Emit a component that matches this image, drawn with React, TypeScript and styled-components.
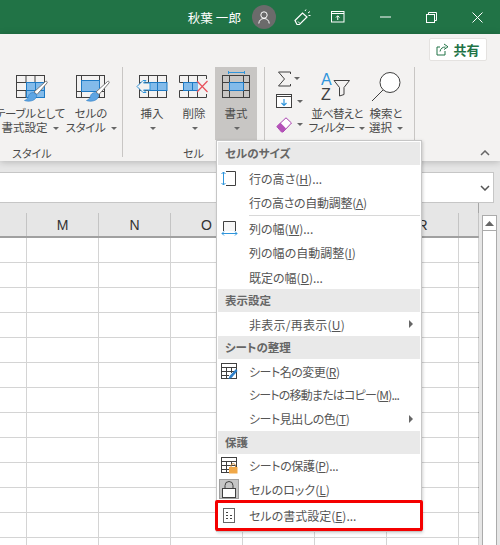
import React, { ReactElement, ReactNode } from 'react'
import styled, { createGlobalStyle } from 'styled-components'

const Global = createGlobalStyle`
  html, body {
    margin: 0;
    padding: 0;
    background: #fff;
  }
  * {
    box-sizing: border-box;
  }
`

const JP = `"Noto Sans CJK JP", "Noto Sans", sans-serif`

const Styled = {
  Page: styled.div`
    position: relative;
    width: 500px;
    height: 545px;
    overflow: hidden;
    background: #e6e6e6;
    font-family: ${JP};
    font-feature-settings: 'palt';
  `,
  TitleBar: styled.div`
    display: flex;
    align-items: center;
    justify-content: flex-end;
    height: 34px;
    background: #217346;
    color: #fff;
    font-size: 12.5px;
  `,
  UserName: styled.div`
    margin-right: 11px;
    letter-spacing: 0.1px;
  `,
  Avatar: styled.div`
    display: flex;
    align-items: center;
    justify-content: center;
    width: 24px;
    height: 24px;
    margin-right: 14px;
    border-radius: 50%;
    background: #6b6b6b;
  `,
  TitleIcon: styled.div<{ $w: number }>`
    display: flex;
    align-items: center;
    justify-content: center;
    width: ${(p) => p.$w}px;
    height: 34px;
  `,
  Ribbon: styled.div`
    position: relative;
    height: 127px;
    background: #f3f2f1;
    box-shadow: 0 1px 7px rgba(0, 0, 0, 0.22);
  `,
  ShareRow: styled.div`
    display: flex;
    justify-content: flex-end;
    height: 33px;
    padding: 4px 13px 0 0;
  `,
  ShareButton: styled.div`
    display: flex;
    align-items: center;
    justify-content: center;
    gap: 4px;
    width: 58px;
    height: 23px;
    background: #fff;
    border: 1px solid #e4e2e0;
    border-radius: 2px;
    color: #217346;
    font-size: 13px;
    font-weight: 700;
  `,
  Groups: styled.div`
    display: flex;
    height: 90px;
  `,
  Group: styled.div<{ $w: number }>`
    display: flex;
    flex-direction: column;
    flex: none;
    width: ${(p) => p.$w}px;
    height: 90px;
    border-right: 1px solid #c8c6c4;
  `,
  GroupButtons: styled.div<{ $align?: string; $pad?: string }>`
    display: flex;
    flex: none;
    height: 79px;
    justify-content: ${(p) => p.$align || 'flex-start'};
    padding: ${(p) => p.$pad || '0'};
  `,
  GroupLabel: styled.div<{ $pad: string }>`
    flex: none;
    height: 14px;
    padding: ${(p) => p.$pad};
    color: #4a4a4a;
    font-size: 11px;
    line-height: 14px;
    white-space: nowrap;
  `,
  BigButton: styled.div<{ $w: number; $active?: boolean }>`
    display: flex;
    flex: none;
    flex-direction: column;
    align-items: center;
    width: ${(p) => p.$w}px;
    height: 73px;
    background: ${(p) => (p.$active ? '#c8c6c4' : 'transparent')};
    color: #4a4a4a;
    font-size: 11.5px;
    line-height: 14px;
    white-space: nowrap;
  `,
  BigIcon: styled.div<{ $top: number }>`
    display: flex;
    align-items: flex-start;
    justify-content: center;
    height: 39px;
    padding-top: ${(p) => p.$top}px;
  `,
  BigLine: styled.div<{ $ls?: number }>`
    letter-spacing: ${(p) => p.$ls || 0}px;
  `,
  Caret: styled.span<{ $solo?: boolean }>`
    display: inline-block;
    width: 0;
    height: 0;
    margin-left: ${(p) => (p.$solo ? 1 : 5)}px;
    vertical-align: 2px;
    border-left: 3px solid transparent;
    border-right: 3px solid transparent;
    border-top: 3px solid #666;
  `,
  SmallStack: styled.div`
    display: flex;
    flex: none;
    flex-direction: column;
    width: 43px;
    padding-left: 11px;
  `,
  SmallButton: styled.div`
    display: flex;
    align-items: center;
    height: 23px;
  `,
  Collapse: styled.div`
    position: absolute;
    right: 10px;
    bottom: 5px;
    display: flex;
  `,
  FormulaRow: styled.div`
    height: 42px;
    padding: 11px 6px 0 0;
  `,
  FormulaBox: styled.div`
    display: flex;
    align-items: center;
    justify-content: flex-end;
    height: 31px;
    padding-right: 3px;
    background: #fff;
    border: 1px solid #c6c6c6;
    border-left: 0;
  `,
  SheetArea: styled.div`
    display: flex;
    height: 342px;
  `,
  Sheet: styled.div`
    flex: none;
    width: 479px;
    border-right: 1px solid #a6a6a6;
  `,
  HeaderRow: styled.div`
    display: flex;
    align-items: flex-end;
    height: 35px;
    border-bottom: 2px solid #a0a0a0;
  `,
  HeaderCell: styled.div<{ $w: number }>`
    display: flex;
    align-items: center;
    justify-content: center;
    flex: none;
    width: ${(p) => p.$w}px;
    height: 23px;
    border-right: 1px solid #c4c4c4;
    color: #333;
    font-family: 'Liberation Sans', sans-serif;
    font-size: 14px;
  `,
  Row: styled.div`
    display: flex;
    height: 25px;
    background: #fff;
    border-bottom: 1px solid #d4d4d4;
  `,
  Cell: styled.div<{ $w: number }>`
    flex: none;
    width: ${(p) => p.$w}px;
    border-right: 1px solid #d4d4d4;
  `,
  ScrollBar: styled.div`
    display: flex;
    flex-direction: column;
    flex: none;
    width: 15px;
    height: 331px;
    margin: 12px 0 0 3px;
    background: #fff;
    border: 1px solid #ababab;
    border-bottom: 0;
  `,
  ScrollUp: styled.div`
    display: flex;
    align-items: center;
    justify-content: center;
    height: 15px;
    border-bottom: 1px solid #ababab;
  `,
  Menu: styled.div`
    position: absolute;
    left: 216px;
    top: 140px;
    width: 206px;
    padding: 1px;
    background: #fff;
    border: 1px solid #c6c6c6;
    box-shadow: 1px 1px 3px rgba(0, 0, 0, 0.18);
    color: #555;
    font-size: 12px;
  `,
  MenuHeader: styled.div`
    height: 23px;
    padding-left: 7px;
    background: #e9e9e9;
    color: #666;
    font-size: 11.5px;
    font-weight: 700;
    line-height: 23px;
  `,
  MenuItem: styled.div<{ $h: number; $ls: number; $marked?: boolean }>`
    position: relative;
    display: flex;
    align-items: center;
    height: ${(p) => p.$h}px;
    letter-spacing: ${(p) => p.$ls}px;
    white-space: nowrap;

    ${(p) =>
      p.$marked &&
      `
      &::after {
        content: '';
        position: absolute;
        inset: -1px -3px -1px -3px;
        border: 3px solid #f40000;
        border-radius: 2px;
      }
    `}
  `,
  MenuIcon: styled.div`
    display: flex;
    align-items: center;
    justify-content: center;
    flex: none;
    width: 31px;
    height: 100%;
    padding-right: 9px;
  `,
  LockBox: styled.div`
    display: flex;
    flex: none;
    align-items: center;
    justify-content: center;
    width: 20px;
    height: 20px;
    background: #c6c6c6;
    border: 1px solid #a0a0a0;
  `,
  Underline: styled.span`
    text-decoration: underline;
  `,
  SubArrow: styled.span`
    position: absolute;
    right: 7px;
    top: 50%;
    margin-top: -4px;
    border-top: 4px solid transparent;
    border-bottom: 4px solid transparent;
    border-left: 4px solid #666;
  `,
  MenuLine: styled.div`
    height: 1px;
    margin: 2px 0 0 31px;
    background: #d8d8d8;
  `,
}

const LINE = '#404040'
const BLUE = '#83bbea'
const DBLUE = '#1e7ac4'

function Brush({ dx = 0 }: { dx?: number }): ReactElement {
  return (
    <g transform={`translate(${dx} 0)`}>
      <path d="M29.500 6.500c1-.8 2.300.4 1.500 1.500L21 19.500l-3-2.500z" fill="#fff" stroke="#7a7a7a" />
      <path d="M17.500 17.500c-3 0-4.500 1.500-5 3.500-.4 2-1.500 3.500-4 4.500 4 1.500 9 .5 11-2 1.200-1.500 1.500-3.500 1-4z" fill="#5ea5e3" stroke="#2b7cc4" strokeWidth="0.600" />
    </g>
  )
}

function TableStyleIcon(): ReactElement {
  return (
    <svg width="44" height="28" viewBox="-8 0 44 28" fill="none" overflow="visible">
      <rect x="0.500" y="0.500" width="28" height="22" stroke={LINE} />
      <path d="M10 1V8M19 1V8M1 7.500H10M19 7.500H28M1 15.500H10M10 15V22" stroke={LINE} />
      <rect x="10.500" y="7.500" width="18" height="15" fill={BLUE} stroke={DBLUE} />
      <path d="M19.500 8V22M11 15.500H28" stroke={DBLUE} />
      <Brush />
    </svg>
  )
}

function CellStyleIcon(): ReactElement {
  return (
    <svg width="44" height="28" viewBox="-7 0 44 28" fill="none" overflow="visible">
      <rect x="0.500" y="0.500" width="28" height="22" stroke={LINE} />
      <path d="M5.500 1V22M23.500 1V22M1 16.500H28" stroke={LINE} />
      <rect x="5.500" y="5.500" width="18" height="11" fill={BLUE} stroke={DBLUE} />
      <Brush dx={2} />
    </svg>
  )
}

function InsertIcon(): ReactElement {
  return (
    <svg width="33" height="24" viewBox="0 0 33 24" fill="none">
      <rect x="3.500" y="0.500" width="27" height="22" stroke={LINE} />
      <path d="M12.500 1V22M21.500 1V22M4 7.500H30M4 15.500H30" stroke={LINE} />
      <rect x="13" y="7.500" width="18" height="8" fill={BLUE} stroke={DBLUE} />
      <path d="M21.500 8V15" stroke={DBLUE} />
      <path d="M14 8H7.500L10 5.500H7L1 11.500l6 6h3L7.500 15H14z" fill="#f3f2f1" stroke="#2f95dc" />
    </svg>
  )
}

function DeleteIcon(): ReactElement {
  return (
    <svg width="30" height="24" viewBox="0 0 30 24" fill="none">
      <path d="M0.500 0.500H27.500V22.500H0.500V15.500H4.500V7.500H0.500z" stroke={LINE} />
      <path d="M9.500 1V7M18.500 1V7M9.500 16V22M18.500 16V22M4 7.500H27M4 15.500H27" stroke={LINE} />
      <rect x="4.500" y="7.500" width="14" height="8" fill={BLUE} stroke={DBLUE} />
      <path d="M13.500 8V15" stroke={DBLUE} />
      <path d="M18 7.500l4 4-4 4z" fill={BLUE} />
      <rect x="19" y="4" width="11" height="15" fill="#f3f2f1" />
      <path d="M18 6l10.500 11M28.500 6L18 17" stroke="#e8505b" strokeWidth="1.200" />
    </svg>
  )
}

function FormatIcon(): ReactElement {
  return (
    <svg width="29" height="27" viewBox="0 0 29 27" fill="none">
      <path d="M6.500 1.500H22.500M6.500 0V3M22.500 0V3" stroke="#2f95dc" />
      <rect x="0.500" y="4.500" width="27" height="22" stroke={LINE} />
      <path d="M7.500 5V26M21.500 5V26M1 11.500H27M1 19.500H27" stroke={LINE} />
      <rect x="7.500" y="11.500" width="14" height="8" fill={BLUE} stroke={DBLUE} />
    </svg>
  )
}

function SumIcon(): ReactElement {
  return (
    <svg width="17" height="16" viewBox="-2 0 17 16" fill="none">
      <path d="M12.500 3V1H0.500L6.500 8L0.500 15H12.500V13" stroke={LINE} />
    </svg>
  )
}

function FillIcon(): ReactElement {
  return (
    <svg width="16" height="15" viewBox="0 0 16 15" fill="none">
      <rect x="0.500" y="0.500" width="15" height="13" fill="#fff" stroke={LINE} />
      <path d="M1 2.500H15" stroke={LINE} />
      <path d="M8 5V11.500M5.500 9L8 11.500L10.500 9" stroke="#2f95dc" strokeWidth="1.200" />
    </svg>
  )
}

function EraserIcon(): ReactElement {
  return (
    <svg width="16" height="16" viewBox="0 0 16 16" fill="none">
      <path d="M10 0.800L15.500 6L7 15H5.500L0.800 9.500z" fill="#fff" stroke="#a83fae" />
      <path d="M0.800 9.500L4.500 5.800L10 11.500L7 15H5.500z" fill="#b452b8" />
    </svg>
  )
}

function SortIcon(): ReactElement {
  return (
    <svg width="32" height="30" viewBox="0 0 32 30" fill="none" fontFamily="Liberation Sans, sans-serif">
      <text x="0" y="13" fontSize="16" fill="#2f95dc">
        A
      </text>
      <text x="0" y="28" fontSize="16" fill={LINE}>
        Z
      </text>
      <path d="M13 8.500H28.500L23 15.500V22.500L18.500 24V15.500z" fill="#f3f2f1" stroke={LINE} />
    </svg>
  )
}

function SearchIcon(): ReactElement {
  return (
    <svg width="30" height="30" viewBox="0 0 30 30" fill="none">
      <circle cx="19" cy="10.500" r="10" fill="#fff" stroke={LINE} />
      <path d="M12 18L1 29" stroke={LINE} />
    </svg>
  )
}

function RowHeightIcon(): ReactElement {
  return (
    <svg width="16" height="17" viewBox="0 0 16 17" fill="none">
      <path d="M5 1.500H14.500V15.500H5" stroke={LINE} />
      <path d="M2.500 2V15M0.500 4L2.500 2L4.500 4M0.500 13L2.500 15L4.500 13" stroke="#2f95dc" />
    </svg>
  )
}

function ColWidthIcon(): ReactElement {
  return (
    <svg width="17" height="16" viewBox="0 0 17 16" fill="none">
      <rect x="2" y="2" width="13" height="9" fill="#f6f6f6" />
      <path d="M2.500 11V1.500H14.500V11" stroke={LINE} />
      <path d="M1 13.500H16M3 11.500L1 13.500L3 15.500M14 11.500L16 13.500L14 15.500" stroke="#2f95dc" />
    </svg>
  )
}

function SheetRenameIcon(): ReactElement {
  return (
    <svg width="17" height="17" viewBox="0 0 17 17" fill="none">
      <rect x="0.500" y="0.500" width="15" height="15" fill="#fff" stroke={LINE} />
      <path d="M1 4.500H15M1 8.500H15M1 12.500H8M5.500 4.500V15.500M10.500 4.500V10" stroke={LINE} />
      <path d="M15 6L8.500 13L7.500 16L10.500 15L16.500 8z" fill="#2f7fc8" />
    </svg>
  )
}

function SheetLockIcon(): ReactElement {
  return (
    <svg width="17" height="17" viewBox="0 0 17 17" fill="none">
      <rect x="0.500" y="0.500" width="15" height="15" fill="#fff" stroke={LINE} />
      <path d="M1 4.500H15M1 8.500H15M1 12.500H8M5.500 4.500V15.500M10.500 4.500V8" stroke={LINE} />
      <rect x="8" y="10" width="8.500" height="6.500" fill="#f0a848" />
      <path d="M10 10V8.500A2.300 2.300 0 0 1 14.500 8.500V10" stroke="#c98a3a" />
    </svg>
  )
}

function PadlockIcon(): ReactElement {
  return (
    <svg width="14" height="17" viewBox="0 0 14 17" fill="none">
      <rect x="0.500" y="7.500" width="13" height="9" fill="#fff" stroke={LINE} />
      <path d="M3 7V4.500A4 4 0 0 1 11 4.500V7" stroke={LINE} />
    </svg>
  )
}

function FormatCellsIcon(): ReactElement {
  return (
    <svg width="12" height="15" viewBox="0 0 12 15" fill="none">
      <rect x="0.500" y="0.500" width="11" height="14" fill="#fff" stroke="#666" />
      <path d="M3 4.500H5M3 7.500H5M3 10.500H5M7 7.500H9M7 10.500H9" stroke="#444" />
    </svg>
  )
}

function MenuRow({
  icon,
  h = 24,
  ls = 0,
  marked,
  sub,
  children,
}: {
  icon?: ReactNode
  h?: number
  ls?: number
  marked?: boolean
  sub?: boolean
  children: ReactNode
}): ReactElement {
  return (
    <Styled.MenuItem $h={h} $ls={ls} $marked={marked}>
      <Styled.MenuIcon>{icon}</Styled.MenuIcon>
      <span>{children}</span>
      {sub && <Styled.SubArrow />}
    </Styled.MenuItem>
  )
}

const COLUMNS = [27, 72, 72, 72, 72, 72, 72, 20]
const HEADERS = ['', 'M', 'N', 'O', 'P', 'Q', 'R', '']

function App(): ReactElement {
  const U = Styled.Underline
  return (
    <Styled.Page>
      <Global />
      <Styled.TitleBar>
        <Styled.UserName>秋葉 一郎</Styled.UserName>
        <Styled.Avatar>
          <svg width="12" height="13" viewBox="0 0 12 13" fill="none" stroke="#fff">
            <circle cx="6" cy="4" r="3.200" />
            <path d="M0.800 12.500C1 9.500 3 7.500 6 7.500S11 9.500 11.200 12.500" />
          </svg>
        </Styled.Avatar>
        <Styled.TitleIcon $w={24}>
          <svg width="17" height="17" viewBox="0 0 17 17" fill="none" stroke="#fff">
            <path d="M1 11.500L8.500 4L13 8L5.500 15.500H3z" strokeWidth="1.200" />
            <path d="M4 12.500L6 14.500M11 2L12 0.500M14 4L16 2.500M14.500 6.500H16.500" />
          </svg>
        </Styled.TitleIcon>
        <Styled.TitleIcon $w={48}>
          <svg width="14" height="12" viewBox="0 0 14 12" fill="none" stroke="#fff">
            <rect x="0.500" y="0.500" width="12.500" height="10.500" />
            <path d="M1 2.500H13M6.750 9V5M5 6.500L6.750 4.700L8.500 6.500" />
          </svg>
        </Styled.TitleIcon>
        <Styled.TitleIcon $w={46}>
          <svg width="11" height="2" viewBox="0 0 11 2" fill="none" stroke="#fff">
            <path d="M0 1H11" />
          </svg>
        </Styled.TitleIcon>
        <Styled.TitleIcon $w={46}>
          <svg width="11" height="11" viewBox="0 0 11 11" fill="none" stroke="#fff">
            <rect x="0.500" y="2.500" width="8" height="8" />
            <path d="M2.500 2.500V0.500H10.500V8.500H8.500" />
          </svg>
        </Styled.TitleIcon>
        <Styled.TitleIcon $w={46}>
          <svg width="11" height="11" viewBox="0 0 11 11" fill="none" stroke="#fff">
            <path d="M0.500 0.500L10.500 10.500M10.500 0.500L0.500 10.500" />
          </svg>
        </Styled.TitleIcon>
      </Styled.TitleBar>

      <Styled.Ribbon>
        <Styled.ShareRow>
          <Styled.ShareButton>
            <svg width="13" height="13" viewBox="0 0 13 13" fill="none" stroke="#217346">
              <path d="M9 8V12H1V4H4" />
              <path d="M4 8.500C4.500 5.500 6.500 4 9.500 4M8 1L12 3.800L8 6.500" />
            </svg>
            共有
          </Styled.ShareButton>
        </Styled.ShareRow>
        <Styled.Groups>
          <Styled.Group $w={123}>
            <Styled.GroupButtons $align="flex-end" $pad="0 5px 0 0">
              <Styled.BigButton $w={70}>
                <Styled.BigIcon $top={8}>
                  <TableStyleIcon />
                </Styled.BigIcon>
                <Styled.BigLine $ls={-0.3}>テーブルとして</Styled.BigLine>
                <Styled.BigLine>
                  書式設定
                  <Styled.Caret />
                </Styled.BigLine>
              </Styled.BigButton>
              <Styled.BigButton $w={52}>
                <Styled.BigIcon $top={8}>
                  <CellStyleIcon />
                </Styled.BigIcon>
                <Styled.BigLine>セルの</Styled.BigLine>
                <Styled.BigLine $ls={-0.3}>
                  スタイル
                  <Styled.Caret />
                </Styled.BigLine>
              </Styled.BigButton>
            </Styled.GroupButtons>
            <Styled.GroupLabel $pad="0 0 0 12px">スタイル</Styled.GroupLabel>
          </Styled.Group>
          <Styled.Group $w={142}>
            <Styled.GroupButtons $pad="0 0 0 8px">
              <Styled.BigButton $w={42}>
                <Styled.BigIcon $top={8}>
                  <InsertIcon />
                </Styled.BigIcon>
                <Styled.BigLine>挿入</Styled.BigLine>
                <Styled.BigLine>
                  <Styled.Caret $solo />
                </Styled.BigLine>
              </Styled.BigButton>
              <Styled.BigButton $w={42}>
                <Styled.BigIcon $top={8}>
                  <DeleteIcon />
                </Styled.BigIcon>
                <Styled.BigLine>削除</Styled.BigLine>
                <Styled.BigLine>
                  <Styled.Caret $solo />
                </Styled.BigLine>
              </Styled.BigButton>
              <Styled.BigButton $w={42} $active>
                <Styled.BigIcon $top={4}>
                  <FormatIcon />
                </Styled.BigIcon>
                <Styled.BigLine>書式</Styled.BigLine>
                <Styled.BigLine>
                  <Styled.Caret $solo />
                </Styled.BigLine>
              </Styled.BigButton>
            </Styled.GroupButtons>
            <Styled.GroupLabel $pad="0 0 0 60px">セル</Styled.GroupLabel>
          </Styled.Group>
          <Styled.Group $w={150}>
            <Styled.GroupButtons>
              <Styled.SmallStack>
                <Styled.SmallButton>
                  <SumIcon />
                  <Styled.Caret $solo />
                </Styled.SmallButton>
                <Styled.SmallButton>
                  <FillIcon />
                  <Styled.Caret />
                </Styled.SmallButton>
                <Styled.SmallButton>
                  <EraserIcon />
                  <Styled.Caret />
                </Styled.SmallButton>
              </Styled.SmallStack>
              <Styled.BigButton $w={58}>
                <Styled.BigIcon $top={5}>
                  <SortIcon />
                </Styled.BigIcon>
                <Styled.BigLine $ls={-0.8}>並べ替えと</Styled.BigLine>
                <Styled.BigLine $ls={-0.9}>
                  フィルター
                  <Styled.Caret />
                </Styled.BigLine>
              </Styled.BigButton>
              <Styled.BigButton $w={40}>
                <Styled.BigIcon $top={5}>
                  <SearchIcon />
                </Styled.BigIcon>
                <Styled.BigLine>検索と</Styled.BigLine>
                <Styled.BigLine>
                  選択
                  <Styled.Caret />
                </Styled.BigLine>
              </Styled.BigButton>
            </Styled.GroupButtons>
          </Styled.Group>
        </Styled.Groups>
        <Styled.Collapse>
          <svg width="10" height="6" viewBox="0 0 10 6" fill="none" stroke="#666" strokeWidth="1.500">
            <path d="M1 5L5 1L9 5" />
          </svg>
        </Styled.Collapse>
      </Styled.Ribbon>

      <Styled.FormulaRow>
        <Styled.FormulaBox>
          <svg width="10" height="6" viewBox="0 0 10 6" fill="none" stroke="#555" strokeWidth="1.500">
            <path d="M1 1L5 5L9 1" />
          </svg>
        </Styled.FormulaBox>
      </Styled.FormulaRow>

      <Styled.SheetArea>
        <Styled.Sheet>
          <Styled.HeaderRow>
            {COLUMNS.map((w, i) => (
              <Styled.HeaderCell key={i} $w={w}>
                {HEADERS[i]}
              </Styled.HeaderCell>
            ))}
          </Styled.HeaderRow>
          {Array.from({ length: 13 }).map((_, r) => (
            <Styled.Row key={r}>
              {COLUMNS.map((w, i) => (
                <Styled.Cell key={i} $w={w} />
              ))}
            </Styled.Row>
          ))}
        </Styled.Sheet>
        <Styled.ScrollBar>
          <Styled.ScrollUp>
            <svg width="9" height="5" viewBox="0 0 9 5">
              <path d="M0 5L4.500 0L9 5z" fill="#666" />
            </svg>
          </Styled.ScrollUp>
        </Styled.ScrollBar>
      </Styled.SheetArea>

      <Styled.Menu>
        <Styled.MenuHeader>セルのサイズ</Styled.MenuHeader>
        <MenuRow h={27} icon={<RowHeightIcon />}>
          行の高さ(<U>H</U>)...
        </MenuRow>
        <MenuRow h={21} ls={-0.3}>
          行の高さの自動調整(<U>A</U>)
        </MenuRow>
        <Styled.MenuLine />
        <MenuRow icon={<ColWidthIcon />}>
          列の幅(<U>W</U>)...
        </MenuRow>
        <MenuRow h={25}>
          列の幅の自動調整(<U>I</U>)
        </MenuRow>
        <MenuRow>
          既定の幅(<U>D</U>)...
        </MenuRow>
        <Styled.MenuHeader>表示設定</Styled.MenuHeader>
        <MenuRow sub ls={0.25}>
          非表示/再表示(<U>U</U>)
        </MenuRow>
        <Styled.MenuHeader>シートの整理</Styled.MenuHeader>
        <MenuRow ls={-0.5} icon={<SheetRenameIcon />}>
          シート名の変更(<U>R</U>)
        </MenuRow>
        <MenuRow h={23} ls={-0.8}>
          シートの移動またはコピー(<U>M</U>)...
        </MenuRow>
        <MenuRow h={25} sub ls={-0.45}>
          シート見出しの色(<U>T</U>)
        </MenuRow>
        <Styled.MenuHeader>保護</Styled.MenuHeader>
        <MenuRow h={23} ls={-0.35} icon={<SheetLockIcon />}>
          シートの保護(<U>P</U>)...
        </MenuRow>
        <MenuRow
          icon={
            <Styled.LockBox>
              <PadlockIcon />
            </Styled.LockBox>
          }
        >
          セルのロック(<U>L</U>)
        </MenuRow>
        <MenuRow h={29} marked icon={<FormatCellsIcon />}>
          セルの書式設定(<U>E</U>)...
        </MenuRow>
      </Styled.Menu>
    </Styled.Page>
  )
}

export default App
